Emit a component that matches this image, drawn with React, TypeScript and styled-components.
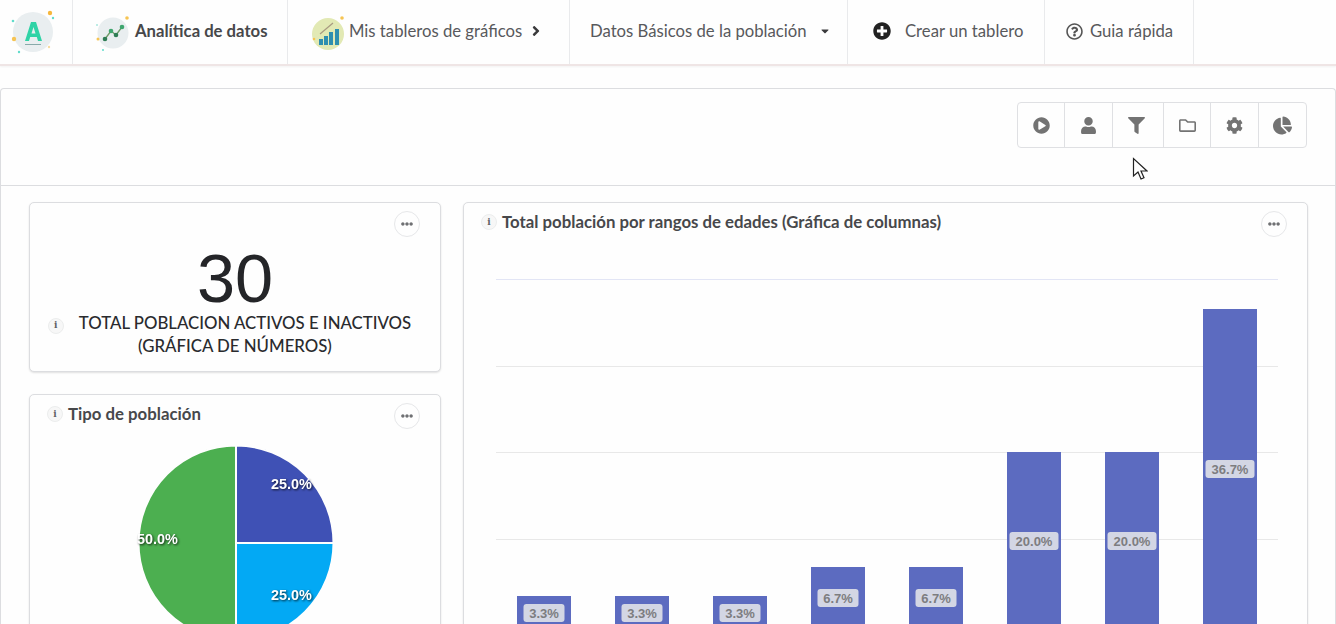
import React from 'react';
import styled, { createGlobalStyle } from 'styled-components';
import {
    FaAngleRight,
    FaCaretDown,
    FaChartPie,
    FaCog,
    FaEllipsisH,
    FaFilter,
    FaPlayCircle,
    FaPlusCircle,
    FaRegFolder,
    FaRegQuestionCircle,
    FaUser,
} from 'react-icons/fa';

const GlobalStyle = createGlobalStyle`
    html, body {
        margin: 0;
        height: 624px;
        overflow: hidden;
        background: #fefefe;
        font-family: Lato, "Open Sans", sans-serif;
        color: #3a3a3c;
    }
`;

const Page = styled.div`
    position: relative;
    width: 1336px;
    height: 624px;
    overflow: hidden;
`;

const Nav = styled.nav`
    display: flex;
    height: 64px;
    border-bottom: 2px solid #efe5e5;
    box-shadow: 0 1px 2px rgba(0, 0, 0, 0.05);
`;

const NavItem = styled.div<{ $width: number; $bold?: boolean; $gap?: number; $pad?: number }>`
    display: flex;
    align-items: center;
    box-sizing: border-box;
    width: ${props => props.$width}px;
    padding: 0 0 2px ${props => props.$pad ?? 0}px;
    gap: ${props => props.$gap ?? 0}px;
    border-right: 1px solid #e9eaec;
    font-size: 16.7px;
    font-weight: ${props => (props.$bold ? 700 : 400)};
    color: ${props => (props.$bold ? '#47484a' : '#58595c')};
    white-space: nowrap;
`;

const Panel = styled.main`
    margin-top: 22px;
    border: 1px solid #dcdde0;
    border-radius: 4px 4px 0 0;
    border-bottom: none;
    height: 540px;
`;

const ToolbarRow = styled.div`
    display: flex;
    justify-content: flex-end;
    box-sizing: border-box;
    height: 97px;
    padding: 13px 28px 0 0;
    border-bottom: 1px solid #dcdde0;
`;

const ButtonGroup = styled.div`
    display: grid;
    grid-template-columns: 47px 48px 51px 47px 48px 47px;
    box-sizing: border-box;
    height: 46px;
    border: 1px solid #dfe0e3;
    border-radius: 4px;
`;

const ToolButton = styled.div<{ $size?: number; $nudge?: number }>`
    display: flex;
    align-items: center;
    justify-content: center;
    box-sizing: border-box;
    padding-right: ${props => props.$nudge ?? 0}px;
    color: #737373;
    font-size: ${props => props.$size ?? 17}px;
    border-right: 1px solid #dfe0e3;

    &:last-child {
        border-right: none;
    }
`;

const Dashboard = styled.div`
    display: grid;
    grid-template-columns: 412px 845px;
    gap: 22px;
    padding: 16px 0 0 28px;
`;

const Column = styled.div`
    display: flex;
    flex-direction: column;
    gap: 22px;
`;

const Card = styled.section<{ $height: number }>`
    position: relative;
    box-sizing: border-box;
    height: ${props => props.$height}px;
    border: 1px solid #dcdde0;
    border-radius: 5px;
    box-shadow: 0 1px 2px rgba(0, 0, 0, 0.12);
    background: #fefefe;
`;

const MenuButton = styled.div`
    position: absolute;
    top: 8px;
    right: 20px;
    display: flex;
    align-items: center;
    justify-content: center;
    width: 24px;
    height: 24px;
    border: 1px solid #e6e7e9;
    border-radius: 50%;
    color: #6f7073;
    font-size: 12px;
`;

const InfoBadge = styled.span`
    display: inline-flex;
    align-items: center;
    justify-content: center;
    flex: none;
    width: 16px;
    height: 16px;
    border: 1px solid #eceded;
    border-radius: 50%;
    box-sizing: border-box;
    font-family: "DejaVu Serif", serif;
    font-size: 9px;
    font-weight: 700;
    color: #606164;
    background: #f7f7f7;
`;

const BigNumber = styled.div`
    margin-top: 44px;
    text-align: center;
    font-family: "Liberation Sans", Arial, sans-serif;
    font-size: 68.5px;
    line-height: 64px;
    color: #242528;
`;

const NumberCaption = styled.div`
    margin: 0 auto;
    width: 380px;
    text-align: center;
    font-size: 16.8px;
    font-weight: 500;
    line-height: 23px;
    color: #2a2b2e;

    ${InfoBadge} {
        margin: 0 15px 0 -11px;
        vertical-align: 1px;
    }
`;

const CardTitle = styled.h3`
    display: flex;
    align-items: center;
    gap: 5px;
    margin: 0;
    padding: 8px 0 0 17px;
    font-size: 16.8px;
    font-weight: 700;
    line-height: 22px;
    color: #47484b;
`;

const PieWrap = styled.svg`
    display: block;
    margin: 18px 0 0 106px;
`;

const ChartWrap = styled.svg`
    display: block;
    margin: 46px 0 0 32px;
`;

const CursorArrow = styled.svg`
    position: absolute;
    left: 1132px;
    top: 157px;
`;

const pieLabel = {
    fontFamily: '"Liberation Sans", Arial, sans-serif',
    fontSize: 14.4,
    fontWeight: 700,
    fill: '#fff',
    style: { filter: 'drop-shadow(1px 1px 1px rgba(0,0,0,.75))' },
};

// the three nav pictures use page coordinates in their viewBox
const LogoIcon = () => (
    <svg width="60" height="60" viewBox="0 1 60 60">
        <circle cx="33" cy="32" r="20" fill="#e9eef0" />
        <path d="M25 41l6-19h5l6 19h-4l-1.200-4h-6.600l-1.200 4zM31.500 33.500h4L33.500 27z" fill="#2fd3a6" />
        <rect x="25" y="44" width="16" height="1" fill="#8aa" />
        <circle cx="50" cy="13" r="2.200" fill="#f6b73c" />
        <circle cx="53" cy="18" r="1.200" fill="#61dccb" />
        <circle cx="13" cy="21" r="1.300" fill="#61dccb" />
        <circle cx="14" cy="39" r="2.200" fill="#f6c453" />
        <circle cx="19" cy="52" r="1.200" fill="#61dccb" />
        <circle cx="49" cy="47" r="1.200" fill="#f6dca0" />
    </svg>
);

const TrendIcon = () => (
    <svg width="39" height="40" viewBox="96 11 39 40">
        <circle cx="113" cy="33" r="15.500" fill="#e9eef0" />
        <path d="M105 39l6-8 5 4 6-8" fill="none" stroke="#6f9a68" strokeWidth="1.300" />
        <circle cx="105" cy="39" r="2.300" fill="#2f7d55" />
        <circle cx="111" cy="31" r="2.300" fill="#3fa66f" />
        <circle cx="116" cy="35" r="2.300" fill="#2f7d55" />
        <circle cx="122" cy="27" r="2.300" fill="#3fa66f" />
        <circle cx="127" cy="18" r="1.800" fill="#f6c453" />
        <circle cx="98" cy="39" r="1.500" fill="#f6c453" />
        <circle cx="97" cy="25" r="1" fill="#a8e6dc" />
        <circle cx="103" cy="50" r="1" fill="#61dccb" />
    </svg>
);

const BarsIcon = () => (
    <svg width="34" height="40" viewBox="312 11 34 40">
        <circle cx="328" cy="34" r="16" fill="#e2e9b4" />
        <path d="M320 34l13-11" stroke="#a89a80" strokeWidth="1.200" />
        <rect x="319" y="39" width="4" height="6" fill="#2f8fb0" />
        <rect x="324" y="36" width="4" height="9" fill="#2f8fb0" />
        <rect x="329" y="32" width="4" height="13" fill="#2f8fb0" />
        <rect x="335" y="29" width="4" height="16" fill="#2f8fb0" />
        <circle cx="342" cy="18" r="1.800" fill="#f6c453" />
        <circle cx="314" cy="39" r="1.300" fill="#f6c453" />
    </svg>
);

const gridLines = [0, 87, 173, 260];
const bars = [
    { x: 21, top: 317, label: '3.3%' },
    { x: 119, top: 317, label: '3.3%' },
    { x: 217, top: 317, label: '3.3%' },
    { x: 315, top: 288, label: '6.7%' },
    { x: 413, top: 288, label: '6.7%' },
    { x: 511, top: 173, label: '20.0%' },
    { x: 609, top: 173, label: '20.0%' },
    { x: 707, top: 30, label: '36.7%' },
];

const BarChart = () => (
    <ChartWrap width="782" height="345" viewBox="0 0 782 345">
        {gridLines.map((y, i) => (
            <line key={y} x1="0" x2="782" y1={y + 0.5} y2={y + 0.5} stroke={i === 0 ? '#e2e5f5' : '#e8e8e8'} />
        ))}
        {bars.map((bar, i) => {
            const labelWidth = bar.label.length > 4 ? 49 : 41;
            const labelY = i < 3 ? 325 : i < 5 ? 310 : i < 7 ? 253 : 181;
            return (
                <g key={bar.x}>
                    <rect x={bar.x} y={bar.top} width="54" height={345 - bar.top} fill="#5c6bc0" />
                    <rect x={bar.x + 27 - labelWidth / 2} y={labelY} width={labelWidth} height="18" rx="3" fill="#d3d6e4" />
                    <text
                        x={bar.x + 27}
                        y={labelY + 13.500}
                        textAnchor="middle"
                        fontFamily='"Liberation Sans", Arial, sans-serif'
                        fontSize="13"
                        fontWeight="700"
                        fill="#7d7d80"
                    >
                        {bar.label}
                    </text>
                </g>
            );
        })}
    </ChartWrap>
);

const PieChart = () => (
    <PieWrap width="200" height="200" viewBox="0 0 200 200">
        <path d="M100 100V2.500A97.500 97.500 0 0 0 100 197.500Z" fill="#4caf50" stroke="#fefefe" strokeWidth="2" />
        <path d="M100 100V2.500A97.500 97.500 0 0 1 197.500 100Z" fill="#3f51b5" stroke="#fefefe" strokeWidth="2" />
        <path d="M100 100H197.500A97.500 97.500 0 0 1 100 197.500Z" fill="#03a9f4" stroke="#fefefe" strokeWidth="2" />
        <text x="135" y="46" textAnchor="start" {...pieLabel}>25.0%</text>
        <text x="135" y="157" textAnchor="start" {...pieLabel}>25.0%</text>
        <text x="1" y="101" textAnchor="start" {...pieLabel}>50.0%</text>
    </PieWrap>
);

const App = () => (
    <Page>
        <GlobalStyle />
        <Nav>
            <NavItem $width={73}>
                <LogoIcon />
            </NavItem>
            <NavItem $width={215} $bold $pad={23}>
                <TrendIcon />
                Analítica de datos
            </NavItem>
            <NavItem $width={282} $pad={24} $gap={3}>
                <BarsIcon />
                Mis tableros de gráficos
                <FaAngleRight size={16} color="#3a3a3c" style={{ marginLeft: 3 }} />
            </NavItem>
            <NavItem $width={278} $pad={20} $gap={12}>
                Datos Básicos de la población
                <FaCaretDown size={12} color="#3a3a3c" />
            </NavItem>
            <NavItem $width={197} $pad={25} $gap={14}>
                <FaPlusCircle size={18} color="#222" />
                Crear un tablero
            </NavItem>
            <NavItem $width={149} $pad={21} $gap={7}>
                <FaRegQuestionCircle size={17} color="#555" />
                Guia rápida
            </NavItem>
        </Nav>
        <Panel>
            <ToolbarRow>
                <ButtonGroup>
                    <ToolButton><FaPlayCircle /></ToolButton>
                    <ToolButton><FaUser /></ToolButton>
                    <ToolButton $nudge={4}><FaFilter /></ToolButton>
                    <ToolButton><FaRegFolder /></ToolButton>
                    <ToolButton><FaCog /></ToolButton>
                    <ToolButton $size={19}><FaChartPie /></ToolButton>
                </ButtonGroup>
            </ToolbarRow>
            <Dashboard>
                <Column>
                    <Card $height={170}>
                        <MenuButton><FaEllipsisH /></MenuButton>
                        <BigNumber>30</BigNumber>
                        <NumberCaption>
                            <InfoBadge>i</InfoBadge>
                            TOTAL POBLACION ACTIVOS E INACTIVOS (GRÁFICA DE NÚMEROS)
                        </NumberCaption>
                    </Card>
                    <Card $height={300}>
                        <MenuButton><FaEllipsisH /></MenuButton>
                        <CardTitle>
                            <InfoBadge>i</InfoBadge>
                            Tipo de población
                        </CardTitle>
                        <PieChart />
                    </Card>
                </Column>
                <Card $height={500}>
                    <MenuButton><FaEllipsisH /></MenuButton>
                    <CardTitle>
                        <InfoBadge>i</InfoBadge>
                        Total población por rangos de edades (Gráfica de columnas)
                    </CardTitle>
                    <BarChart />
                </Card>
            </Dashboard>
        </Panel>
        <CursorArrow width="16" height="25" viewBox="0 0 16 25">
            <path d="M1.500 1.500V19l4.500-4 3 7 3-1.300-3-6.700h6z" fill="#fff" stroke="#222" strokeWidth="1.200" />
        </CursorArrow>
    </Page>
);

export default App;
